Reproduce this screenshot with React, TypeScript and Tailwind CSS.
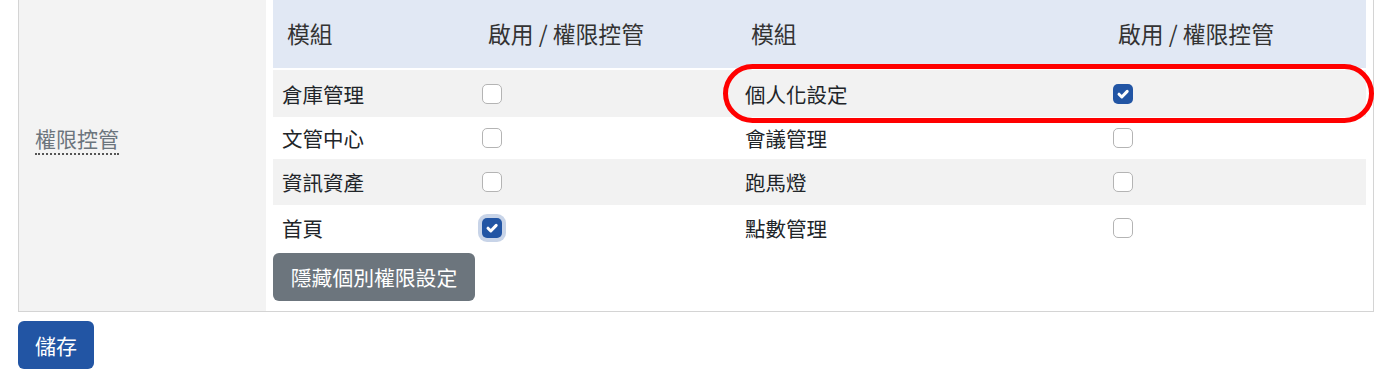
import React from 'react';

type Row = { left: string; leftOn: boolean; right: string; rightOn: boolean; gray: boolean; h: string };

const rows: Row[] = [
  { left: '倉庫管理', leftOn: false, right: '個人化設定', rightOn: true, gray: true, h: 'h-[47px]' },
  { left: '文管中心', leftOn: false, right: '會議管理', rightOn: false, gray: false, h: 'h-[42px]' },
  { left: '資訊資產', leftOn: false, right: '跑馬燈', rightOn: false, gray: true, h: 'h-[46px]' },
  { left: '首頁', leftOn: true, right: '點數管理', rightOn: false, gray: false, h: 'h-[46px]' },
];

function Check({ on, focus }: { on: boolean; focus?: boolean }) {
  if (!on) {
    return <span className="block w-5 h-5 rounded-[5px] border border-[#b4b4b4] bg-white" />;
  }
  return (
    <span
      className={
        'flex w-5 h-5 items-center justify-center rounded-[5px] bg-[#2255a4] ' +
        (focus ? 'shadow-[0_0_0_4px_rgba(34,85,164,0.25)]' : '')
      }
    >
      <svg viewBox="0 0 20 20" className="w-5 h-5">
        <path d="M6 10.2l2.8 2.8L14.2 7.4" fill="none" stroke="#fff" strokeWidth="3" strokeLinecap="round" strokeLinejoin="round" />
      </svg>
    </span>
  );
}

export default function App() {
  return (
    <div
      className="relative w-[1400px] h-[375px] bg-white text-[20.5px] leading-[30px] text-[#212529] overflow-hidden"
      style={{ fontFamily: '"Noto Sans CJK TC", "Noto Sans", sans-serif' }}
    >
      {/* form box */}
      <div className="ml-[18px] w-[1356px] flex border-x border-b border-[#d4d4d4]">
        <div className="w-[247px] bg-[#f3f3f3] pl-[16px] pt-[123px]">
          <span className="text-[21px] text-[#6c757d] border-b-2 border-dotted border-[#555]">權限控管</span>
        </div>

        <div className="px-[7px] pb-[10px]">
          <div className="w-[1093px]">
            <div className="grid grid-cols-[200px_263px_368px_262px] h-[68px] items-center bg-[#e1e8f4] text-[#333] text-[22.8px] mb-[2px]">
              <div className="pl-[14px]">模組</div>
              <div className="pl-[15px]">啟用 / 權限控管</div>
              <div className="pl-[15px]">模組</div>
              <div className="pl-[14px]">啟用 / 權限控管</div>
            </div>

            {rows.map((r, i) => (
              <div
                key={i}
                className={'grid grid-cols-[200px_263px_368px_262px] items-center ' + r.h + ' ' + (r.gray ? 'bg-[#f2f2f2]' : 'bg-white')}
              >
                <div className="pl-[9px]">{r.left}</div>
                <div className="pl-[9px]">
                  <Check on={r.leftOn} focus={r.leftOn} />
                </div>
                <div className="pl-[9px]">{r.right}</div>
                <div className="pl-[9px]">
                  <Check on={r.rightOn} />
                </div>
              </div>
            ))}

            <button className="mt-[2px] w-[202px] h-[48px] rounded-[6px] bg-[#6c757d] text-white text-[20.8px]">
              隱藏個別權限設定
            </button>
          </div>
        </div>
      </div>

      <button className="ml-[18px] mt-[9px] w-[76px] h-[48px] rounded-[6px] bg-[#2255a4] text-white text-[21px]">
        儲存
      </button>

      {/* red annotation */}
      <div className="absolute left-[723px] top-[64px] w-[651px] h-[59px] rounded-full border-[5px] border-[#ff0000]" />
    </div>
  );
}
